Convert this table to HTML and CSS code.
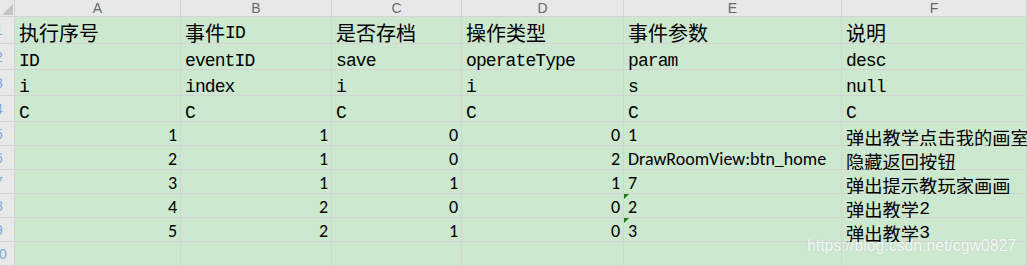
FILE: index.html
```html
<!DOCTYPE html>
<html lang="zh">
<head>
<meta charset="utf-8">
<title>Sheet</title>
<link rel="stylesheet" href="styles.css">
</head>
<body>
<div class="sheet">
  <div class="corner"><span class="tri"></span></div>
  <div class="hd">A</div>
  <div class="hd">B</div>
  <div class="hd">C</div>
  <div class="hd">D</div>
  <div class="hd">E</div>
  <div class="hd">F</div>

  <div class="rh"><span>1</span></div>
  <div class="c big first"><span class="zh">执行序号</span></div>
  <div class="c big first"><span class="zh">事件</span>ID</div>
  <div class="c big first"><span class="zh">是否存档</span></div>
  <div class="c big first"><span class="zh">操作类型</span></div>
  <div class="c big first"><span class="zh">事件参数</span></div>
  <div class="c big first"><span class="zh">说明</span></div>

  <div class="rh"><span>2</span></div>
  <div class="c big">ID</div>
  <div class="c big">eventID</div>
  <div class="c big">save</div>
  <div class="c big">operateType</div>
  <div class="c big">param</div>
  <div class="c big">desc</div>

  <div class="rh"><span>3</span></div>
  <div class="c big">i</div>
  <div class="c big">index</div>
  <div class="c big">i</div>
  <div class="c big">i</div>
  <div class="c big">s</div>
  <div class="c big">null</div>

  <div class="rh"><span>4</span></div>
  <div class="c big">C</div>
  <div class="c big">C</div>
  <div class="c big">C</div>
  <div class="c big">C</div>
  <div class="c big">C</div>
  <div class="c big">C</div>

  <div class="rh"><span>5</span></div>
  <div class="c num">1</div>
  <div class="c num">1</div>
  <div class="c num">0</div>
  <div class="c num">0</div>
  <div class="c sans">1</div>
  <div class="c small"><span class="zh">弹出教学点击我的画室</span></div>

  <div class="rh"><span>6</span></div>
  <div class="c num">2</div>
  <div class="c num">1</div>
  <div class="c num">0</div>
  <div class="c num">2</div>
  <div class="c sans">DrawRoomView:btn_home</div>
  <div class="c small"><span class="zh">隐藏返回按钮</span></div>

  <div class="rh"><span>7</span></div>
  <div class="c num">3</div>
  <div class="c num">1</div>
  <div class="c num">1</div>
  <div class="c num">1</div>
  <div class="c sans">7</div>
  <div class="c small"><span class="zh">弹出提示教玩家画画</span></div>

  <div class="rh"><span>8</span></div>
  <div class="c num">4</div>
  <div class="c num">2</div>
  <div class="c num">0</div>
  <div class="c num">0</div>
  <div class="c sans flag">2</div>
  <div class="c small"><span class="zh">弹出教学</span>2</div>

  <div class="rh"><span>9</span></div>
  <div class="c num">5</div>
  <div class="c num">2</div>
  <div class="c num">1</div>
  <div class="c num">0</div>
  <div class="c sans flag">3</div>
  <div class="c small"><span class="zh">弹出教学</span>3</div>

  <div class="rh"><span>10</span></div>
  <div class="c"></div>
  <div class="c"></div>
  <div class="c"></div>
  <div class="c"></div>
  <div class="c"></div>
  <div class="c"></div>
</div>
<div class="watermark">https://blog.csdn.net/cgw0827</div>
</body>
</html>
```

FILE: styles.css
```css
html, body {
  margin: 0;
  padding: 0;
  overflow: hidden;
  background: #ffffff;
}

body {
  position: relative;
  width: 1027px;
  height: 266px;
}

.sheet {
  display: grid;
  grid-template-columns: 14px 165px 150px 129px 161px 217px 184px;
  grid-template-rows: 16px 26px 25px 25px 25px repeat(6, 23px);
  gap: 1px;
  padding: 0 1px 1px 0;
  background: #d4d4d4;
  width: 1026px;
}

.corner {
  background: #e8e8e8;
  position: relative;
  overflow: hidden;
}

.corner .tri {
  position: absolute;
  right: 1px;
  bottom: 1px;
  width: 0;
  height: 0;
  border-left: 11px solid transparent;
  border-bottom: 11px solid #c4c4c4;
}

.hd {
  background: #e8e8e8;
  color: #6a6a6a;
  font-family: "Liberation Sans", Arial, sans-serif;
  font-size: 14px;
  line-height: 16px;
  text-align: center;
}

.rh {
  background: #e8e8e8;
  overflow: hidden;
  display: flex;
  align-items: center;
}

.rh span {
  flex: none;
  width: 26px;
  margin-left: -14px;
  text-align: center;
  color: #7fa8da;
  font-family: "Liberation Sans", Arial, sans-serif;
  font-size: 14px;
}

.c {
  background: #cce8cf;
  color: #000;
  display: flex;
  align-items: flex-end;
  padding: 0 3px 0 4px;
  white-space: nowrap;
  position: relative;
  font-family: "Liberation Mono", "Noto Sans CJK SC", monospace;
  line-height: 14px;
}

.c.big {
  font-size: 18px;
  letter-spacing: -0.9px;
  padding-bottom: 1px;
}

.c.big.first {
  padding-bottom: 3px;
}

.c.big .zh {
  font-size: 20px;
  letter-spacing: 0;
}

.c.small {
  font-size: 18px;
  letter-spacing: -1.8px;
  padding-bottom: 1px;
}

.c.small .zh {
  font-size: 18.3px;
  letter-spacing: 0;
}

.zh {
  font-family: "Noto Sans CJK SC", sans-serif;
}

.c.num,
.c.sans {
  font-family: "Carlito", "Liberation Sans", Arial, sans-serif;
  font-size: 18px;
  padding-bottom: 3px;
}

.c.num {
  justify-content: flex-end;
}

.c.flag::before {
  content: "";
  position: absolute;
  top: 0;
  left: 0;
  width: 0;
  height: 0;
  border-top: 5px solid #1d7d1d;
  border-right: 5px solid transparent;
}

.watermark {
  position: absolute;
  left: 807px;
  top: 237px;
  font-family: "Liberation Sans", Arial, sans-serif;
  font-size: 15.8px;
  color: rgba(255, 255, 255, 0.9);
  text-shadow: 0 0 1px rgba(120, 120, 120, 0.35);
  white-space: nowrap;
}
```
